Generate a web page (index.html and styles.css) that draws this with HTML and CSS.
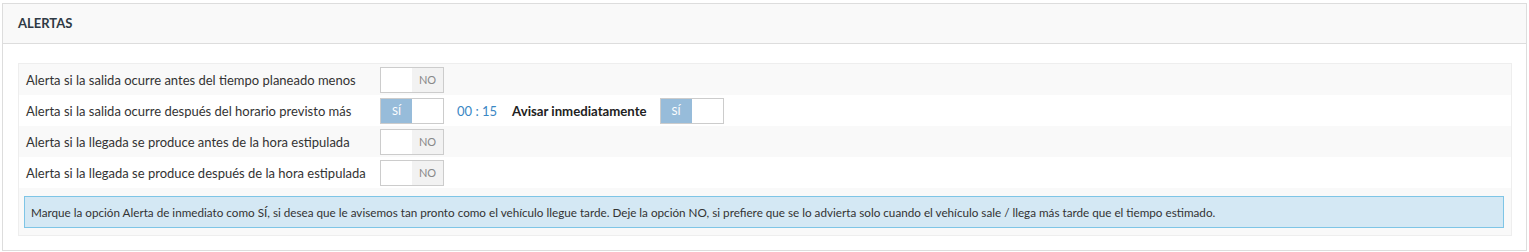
FILE: index.html
```html
<!doctype html>
<html lang="es">
<head>
  <meta charset="UTF-8">
  <title>Alertas</title>
  <link rel="stylesheet" href="styles.css">
</head>
<body>
  <div class="panel">
    <div class="panel-head">ALERTAS</div>
    <div class="panel-body">
      <div class="grid">
        <div class="row odd">
          <div class="label">Alerta si la salida ocurre antes del tiempo planeado menos</div>
          <div class="cell">
            <span class="toggle"><span class="half"></span><span class="half no">NO</span></span>
          </div>
        </div>
        <div class="row">
          <div class="label">Alerta si la salida ocurre después del horario previsto más</div>
          <div class="cell">
            <span class="toggle"><span class="half yes">SÍ</span><span class="half"></span></span>
            <span class="time">00 : 15</span>
            <span class="strong">Avisar inmediatamente</span>
            <span class="toggle"><span class="half yes">SÍ</span><span class="half"></span></span>
          </div>
        </div>
        <div class="row odd">
          <div class="label">Alerta si la llegada se produce antes de la hora estipulada</div>
          <div class="cell">
            <span class="toggle"><span class="half"></span><span class="half no">NO</span></span>
          </div>
        </div>
        <div class="row">
          <div class="label">Alerta si la llegada se produce después de la hora estipulada</div>
          <div class="cell">
            <span class="toggle"><span class="half"></span><span class="half no">NO</span></span>
          </div>
        </div>
        <div class="row odd info-row">
          <div class="info">Marque la opción Alerta de inmediato como SÍ, si desea que le avisemos tan pronto como el vehículo llegue tarde. Deje la opción NO, si prefiere que se lo advierta solo cuando el vehículo sale / llega más tarde que el tiempo estimado.</div>
        </div>
      </div>
    </div>
  </div>
</body>
</html>
```

FILE: styles.css
```css
* {box-sizing: border-box;}
body {margin: 0; padding: 3px 2px 0 2px; font-family: Lato, "Open Sans", sans-serif; color: #333; background: #fff;}

.panel {border: 1px solid #ddd; height: 248px;}
.panel-head {background: #f9f9f9; border-bottom: 1px solid #ddd; height: 40px; padding: 0 15px; font-size: 13px; font-weight: bold; color: #2f3a45; line-height: 38px;}
.panel-body {padding: 19px 14px 15px 15px;}

.grid {border: 1px solid #eee;}
.row {display: flex; align-items: center; height: 31px; background: #fff;}
.row.odd {background: #f9f9f9;}
.label {width: 361px; padding-left: 7px; font-size: 13px; color: #333;}
.cell {display: flex; align-items: center;}

.toggle {display: flex; width: 64px; height: 26px; border: 1px solid #ccc; background: #fff;}
.half {flex: 1; display: flex; align-items: center; justify-content: center; font-size: 11px;}
.half.no {background: #f2f2f2; color: #888;}
.half.yes {background: #97bcda; color: #fff;}

.time {margin-left: 13px; font-size: 13px; color: #3a87c4;}
.strong {margin-left: 15px; margin-right: 13px; font-size: 13.2px; font-weight: bold; color: #222;}

.info-row {height: auto; padding: 8px 7px 7px 5px;}
.info {flex: 1; height: 32px; line-height: 30px; padding: 0 6px; border: 1px solid #7ec5e6; background: #d4e8f4; font-size: 11.7px; color: #333;}
```
